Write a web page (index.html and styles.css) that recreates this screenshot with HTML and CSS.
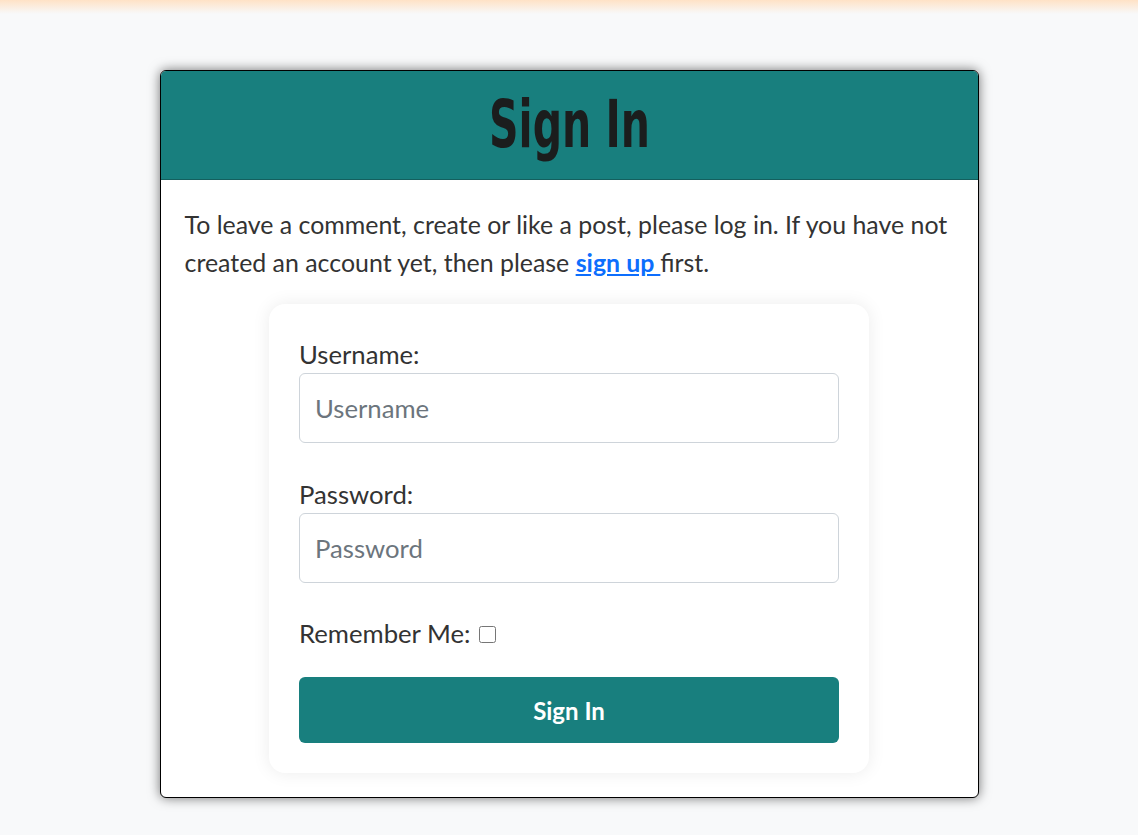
FILE: index.html
```html
<!DOCTYPE html>
<html lang="en">
<head>
<meta charset="utf-8">
<title>Sign In</title>
<link rel="stylesheet" href="styles.css">
</head>
<body>
<main class="page">
  <section class="card">
    <header class="card-header">
      <h1 class="title">Sign In</h1>
    </header>
    <div class="card-body">
      <p class="intro">To leave a comment, create or like a post, please log in. If you have not created an account yet, then please <a class="link" href="#">sign up </a>first.</p>
      <form class="form-card">
        <div class="group first">
          <label class="label" for="u">Username:</label>
          <input class="field" id="u" type="text" placeholder="Username">
        </div>
        <div class="group">
          <label class="label" for="p">Password:</label>
          <input class="field" id="p" type="password" placeholder="Password">
        </div>
        <div class="group remember">
          <label class="label inline" for="r">Remember Me:</label>
          <input class="check" id="r" type="checkbox">
        </div>
        <button class="btn" type="button">Sign In</button>
      </form>
    </div>
  </section>
</main>
</body>
</html>
```
FILE: styles.css
```css
html, body {
  margin: 0;
  padding: 0;
}
body {
  background: linear-gradient(to bottom, #ffe2c6 0px, #f8f9fa 14px) no-repeat, #f8f9fa;
  font-family: Lato, "Noto Sans", sans-serif;
  color: #212529;
  min-height: 835px;
}
.page {
  padding-top: 70px;
  display: flex;
  justify-content: center;
}
.card {
  width: 817px;
  border: 1px solid #000;
  border-radius: 6px;
  background: #fff;
  box-shadow: 0 0 12px rgba(0, 0, 0, 0.55);
  overflow: hidden;
}
.card-header {
  background: #187f7e;
  height: 108px;
  border-bottom: 1px solid #145f5e;
  display: flex;
  align-items: center;
  justify-content: center;
}
.title {
  margin: 0;
  font-family: "DejaVu Sans Condensed", "DejaVu Sans", sans-serif;
  font-stretch: condensed;
  font-weight: 700;
  font-size: 66px;
  color: #1b1d1d;
  line-height: 1;
  padding-top: 0;
  transform: scaleX(0.69);
}
.card-body {
  padding: 25px 24px 24px 24px;
}
.intro {
  margin: 0 0 23px;
  font-size: 24.9px;
  line-height: 38px;
  color: #333;
}
.link {
  color: #0d6efd;
  font-weight: 700;
}
.form-card {
  width: 540px;
  margin: 0 auto;
  padding: 34px 30px 30px;
  background: #fff;
  border-radius: 16px;
  box-shadow: 0 0 18px rgba(0, 0, 0, 0.08);
}
.group {
  margin-bottom: 34px;
}
.group.first {
  margin-bottom: 35px;
}
.label {
  display: block;
  font-size: 25.7px;
  line-height: 33px;
  margin-bottom: 2px;
  color: #333;
}
.label.inline {
  display: inline;
}
.remember {
  margin-bottom: 24px;
  line-height: 33px;
}
.check {
  margin: 0 0 0 4px;
  width: 17px;
  height: 17px;
  vertical-align: 0;
}
.field {
  display: block;
  box-sizing: border-box;
  width: 100%;
  height: 70px;
  padding: 0 15px;
  border: 1px solid #ced4da;
  border-radius: 6px;
  font-family: Lato, "Noto Sans", sans-serif;
  font-size: 25.7px;
  color: #212529;
  background: #fff;
}
.field::placeholder {
  color: #6c757d;
}
.btn {
  display: block;
  width: 100%;
  height: 66px;
  border: none;
  border-radius: 6px;
  background: #187f7e;
  color: #fff;
  font-family: Lato, "Noto Sans", sans-serif;
  font-weight: 700;
  font-size: 24px;
}
```
